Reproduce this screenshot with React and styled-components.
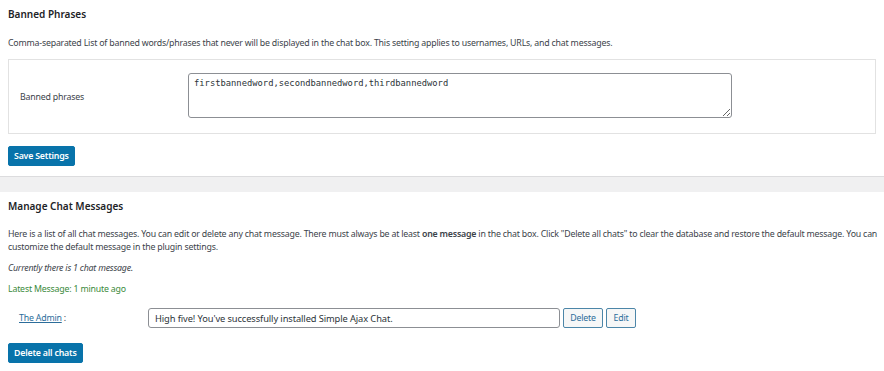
import React from 'react';
import styled, { createGlobalStyle } from 'styled-components';

const Global = createGlobalStyle`
  html, body {
    margin: 0;
    padding: 0;
    background: #fff;
  }
  body {
    font-family: 'Noto Sans', 'Open Sans', sans-serif;
    font-size: 8.8px;
    letter-spacing: -0.2px;
    color: #3c434a;
  }
`;

const Section = styled.section`
  padding: 0 8px;
`;

const Heading = styled.h2`
  margin: 0;
  padding-top: ${(p) => p.$top}px;
  font-size: 10px;
  line-height: 14px;
  font-weight: 600;
  letter-spacing: 0;
  color: #1d2327;
`;

const Text = styled.p`
  margin: ${(p) => p.$top || 0}px ${(p) => (p.$wide ? -8 : 0)}px 0 0;
  line-height: 13px;
  font-style: ${(p) => (p.$italic ? 'italic' : 'normal')};
  color: ${(p) => (p.$green ? '#3a8a3a' : '#3c434a')};
  & strong {
    font-weight: 600;
  }
`;

const FormBox = styled.div`
  margin-top: 9px;
  height: 75px;
  box-sizing: border-box;
  border: 1px solid #e2e2e2;
  display: flex;
  align-items: flex-start;
  padding-top: 13px;
`;

const Label = styled.label`
  width: 168px;
  padding-left: 11px;
  margin-top: 18px;
  color: #3c434a;
`;

const Area = styled.textarea`
  width: 544px;
  height: 45px;
  box-sizing: border-box;
  border: 1px solid #8c8f94;
  border-radius: 3px;
  padding: 3px 5px;
  margin: 0;
  resize: vertical;
  font-family: 'DejaVu Sans Mono', 'Liberation Mono', monospace;
  font-size: 8.8px;
  letter-spacing: 0;
  line-height: 12px;
  color: #2c3338;
  outline: none;
`;

const Primary = styled.button`
  display: block;
  margin-top: ${(p) => p.$top}px;
  height: 20px;
  padding: 0 5px;
  border: 1px solid #0873aa;
  border-radius: 2px;
  background: #0873aa;
  color: #fff;
  font-family: inherit;
  font-size: 8.8px;
  letter-spacing: -0.2px;
  font-weight: 600;
  cursor: pointer;
`;

const Divider = styled.div`
  margin-top: 10px;
  height: 15px;
  background: #f0f0f1;
  border-top: 1px solid #dcdcde;
`;

const MessageRow = styled.div`
  display: flex;
  align-items: center;
  margin-top: 12px;
  height: 20px;
`;

const Author = styled.div`
  width: 129px;
  padding-left: 11px;
  & a {
    color: #2c6d9a;
    text-decoration: underline;
  }
`;

const MsgInput = styled.input`
  width: 412px;
  height: 20px;
  box-sizing: border-box;
  border: 1px solid #8c8f94;
  border-radius: 3px;
  padding: 0 6px;
  margin: 0 3px 0 0;
  font-family: inherit;
  font-size: 9.3px;
  letter-spacing: -0.1px;
  color: #2c3338;
`;

const SmallButton = styled.button`
  width: ${(p) => p.$w}px;
  height: 20px;
  padding: 0;
  margin-right: 3px;
  border: 1px solid #4c86a8;
  border-radius: 2px;
  background: #f6f7f7;
  color: #2c6d9a;
  font-family: inherit;
  font-size: 8.8px;
  letter-spacing: -0.2px;
  cursor: pointer;
`;

export default function App() {
  return (
    <>
      <Global />
      <Section>
        <Heading $top={7}>Banned Phrases</Heading>
        <Text $top={16}>
          Comma-separated List of banned words/phrases that never will be displayed in the chat box. This
          setting applies to usernames, URLs, and chat messages.
        </Text>
        <FormBox>
          <Label>Banned phrases</Label>
          <Area defaultValue="firstbannedword,secondbannedword,thirdbannedword" />
        </FormBox>
        <Primary $top={12}>Save Settings</Primary>
      </Section>
      <Divider />
      <Section>
        <Heading $top={7}>Manage Chat Messages</Heading>
        <Text $top={15} $wide>
          Here is a list of all chat messages. You can edit or delete any chat message. There must always be
          at least <strong>one message</strong> in the chat box. Click "Delete all chats" to clear the database
          and restore the default message. You can
          <br />
          customize the default message in the plugin settings.
        </Text>
        <Text $top={8} $italic>
          Currently there is 1 chat message.
        </Text>
        <Text $top={8} $green>
          Latest Message: 1 minute ago
        </Text>
        <MessageRow>
          <Author>
            <a href="#">The Admin</a> :
          </Author>
          <MsgInput defaultValue="High five! You've successfully installed Simple Ajax Chat." />
          <SmallButton $w={40}>Delete</SmallButton>
          <SmallButton $w={30}>Edit</SmallButton>
        </MessageRow>
        <Primary $top={15}>Delete all chats</Primary>
      </Section>
    </>
  );
}
